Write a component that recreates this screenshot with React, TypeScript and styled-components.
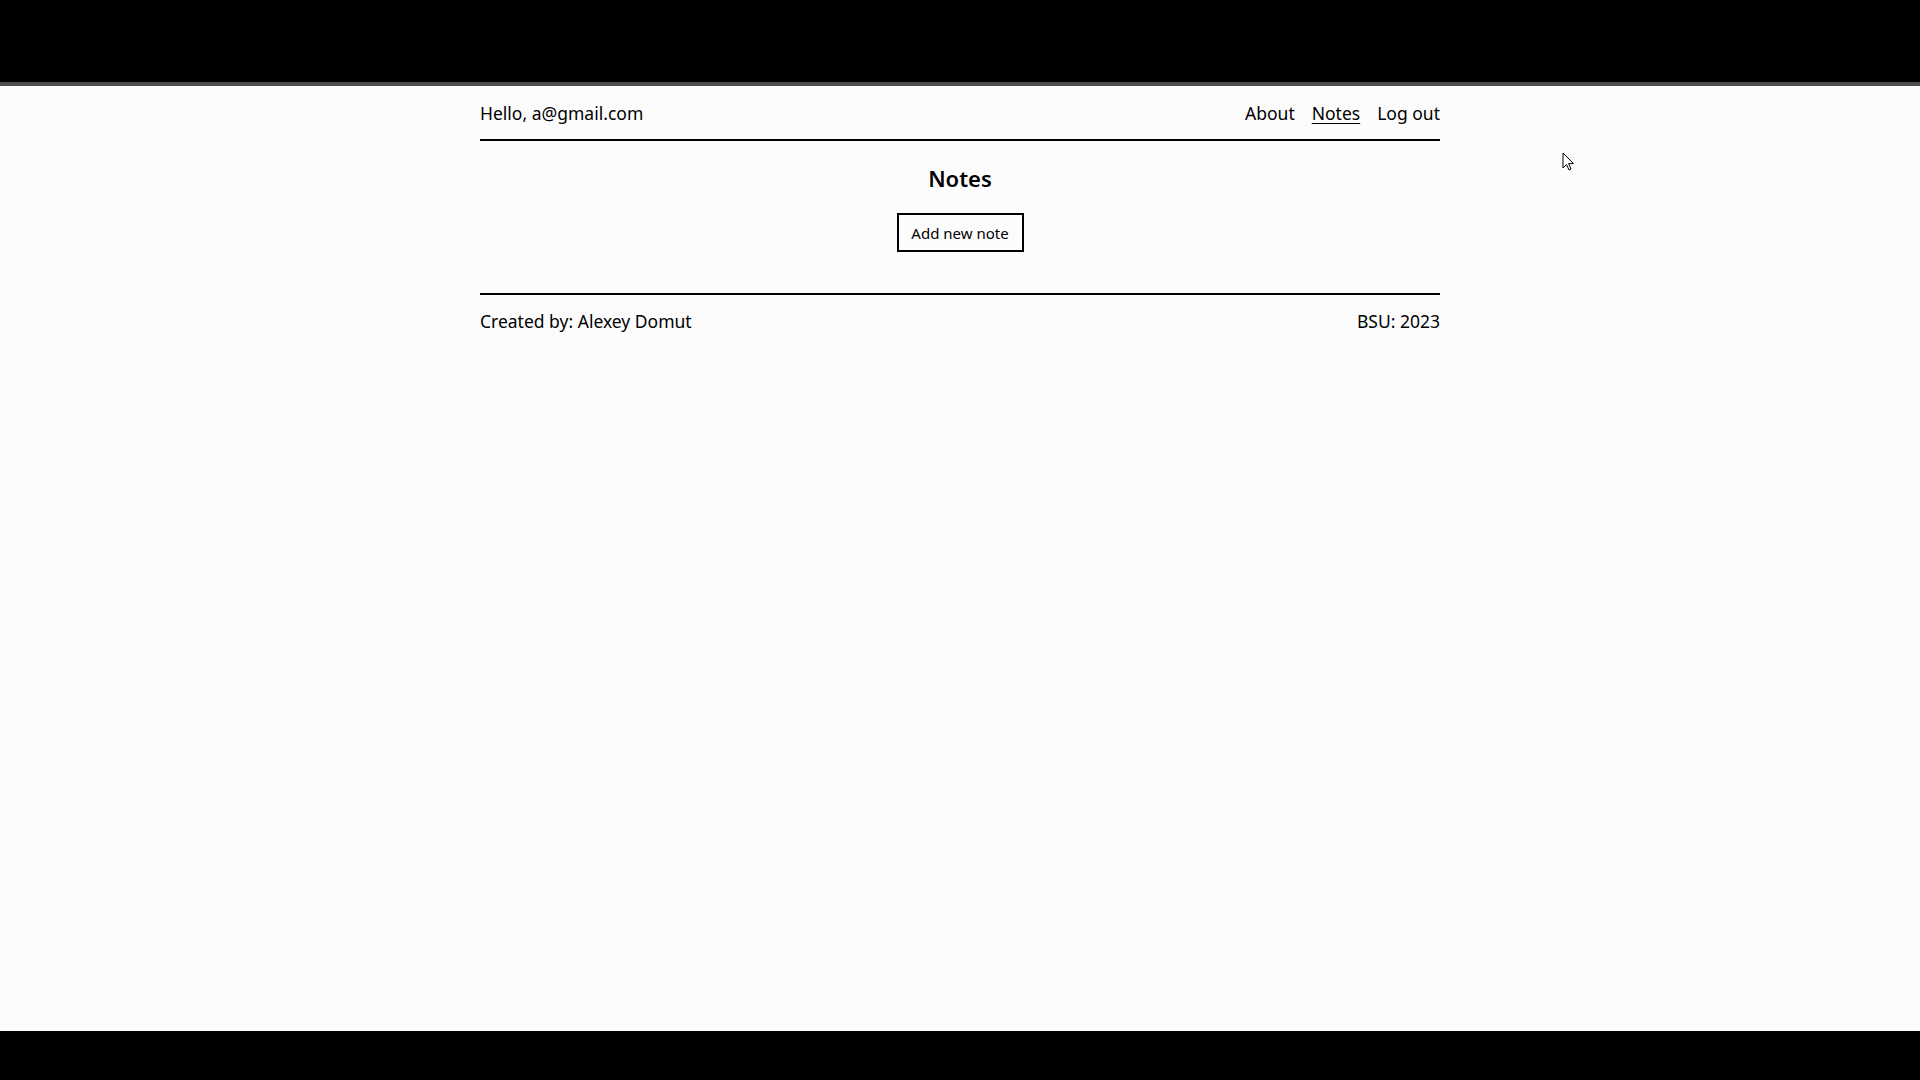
import React from "react";
import styled, { createGlobalStyle } from "styled-components";

const Global = createGlobalStyle`
  html, body { margin: 0; padding: 0; }
  body {
    font-family: "Noto Sans", "Open Sans", sans-serif;
    color: #000;
    background: #000;
  }
`;

const Screen = styled.div`
  width: 1920px;
  height: 1080px;
  display: flex;
  flex-direction: column;
  position: relative;
  overflow: hidden;
`;

const TopBar = styled.div`
  height: 82px;
  background: #000;
  border-bottom: 4px solid #4d4d4d;
  flex: none;
`;

const BottomBar = styled.div`
  height: 49px;
  background: #000;
  flex: none;
`;

const Page = styled.div`
  flex: 1;
  background: #fcfcfd;
`;

const Container = styled.div`
  width: 960px;
  margin: 0 auto;
`;

const Header = styled.header`
  height: 53px;
  display: flex;
  align-items: center;
  justify-content: space-between;
  border-bottom: 2px solid #000;
  font-size: 17.5px;
`;

const Greeting = styled.span`
  line-height: 24px;
`;

const Nav = styled.nav`
  display: flex;
  gap: 17px;
`;

const NavLink = styled.a<{ $active?: boolean }>`
  color: #000;
  text-decoration: ${(p) => (p.$active ? "underline" : "none")};
  text-underline-offset: 3px;
  text-decoration-thickness: 1px;
  line-height: 24px;
  cursor: pointer;
`;

const Main = styled.main`
  display: flex;
  flex-direction: column;
  align-items: center;
  padding: 22px 0 41px;
  border-bottom: 2px solid #000;
`;

const Title = styled.h1`
  margin: 0;
  font-size: 22px;
  line-height: 30px;
  font-weight: 600;
`;

const AddButton = styled.button`
  margin-top: 20px;
  height: 39px;
  width: 127px;
  padding: 0;
  border: 2px solid #000;
  background: transparent;
  font-family: inherit;
  font-size: 15px;
  color: #000;
  cursor: pointer;
`;

const Footer = styled.footer`
  display: flex;
  justify-content: space-between;
  padding-top: 14px;
  font-size: 17.5px;
  line-height: 24px;
`;

const Cursor = styled.svg`
  position: absolute;
  left: 1562px;
  top: 152px;
`;

export default function App() {
  return (
    <>
      <Global />
      <Screen>
        <TopBar />
        <Page>
          <Container>
            <Header>
              <Greeting>Hello, a@gmail.com</Greeting>
              <Nav>
                <NavLink>About</NavLink>
                <NavLink $active>Notes</NavLink>
                <NavLink>Log out</NavLink>
              </Nav>
            </Header>
            <Main>
              <Title>Notes</Title>
              <AddButton>Add new note</AddButton>
            </Main>
            <Footer>
              <span>Created by: Alexey Domut</span>
              <span>BSU: 2023</span>
            </Footer>
          </Container>
        </Page>
        <BottomBar />
        <Cursor width="14" height="20" viewBox="0 0 14 20">
          <path d="M1 1 L1 16 L4.5 12.5 L7 18 L9 17 L6.6 11.6 L11.5 11.6 Z" fill="#fff" stroke="#000" strokeWidth="1" strokeLinejoin="round" />
        </Cursor>
      </Screen>
    </>
  );
}
